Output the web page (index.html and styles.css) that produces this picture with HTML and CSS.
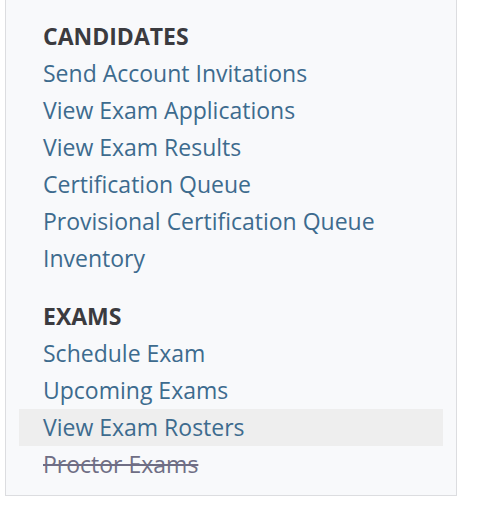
FILE: index.html
```html
<!DOCTYPE html>
<html>
<head>
<meta charset="utf-8">
<link rel="stylesheet" href="styles.css">
</head>
<body>
<nav class="panel">
  <section class="group">
    <h3 class="heading">CANDIDATES</h3>
    <a class="item" href="#">Send Account Invitations</a>
    <a class="item" href="#">View Exam Applications</a>
    <a class="item" href="#">View Exam Results</a>
    <a class="item" href="#">Certification Queue</a>
    <a class="item" href="#">Provisional Certification Queue</a>
    <a class="item" href="#">Inventory</a>
  </section>
  <section class="group">
    <h3 class="heading">EXAMS</h3>
    <a class="item" href="#">Schedule Exam</a>
    <a class="item" href="#">Upcoming Exams</a>
    <a class="item active" href="#">View Exam Rosters</a>
    <a class="item disabled" href="#">Proctor Exams</a>
  </section>
</nav>
</body>
</html>
```
FILE: styles.css
```css
html, body {
  margin: 0;
  padding: 0;
  background: #ffffff;
}
body {
  font-family: "Open Sans", "Lato", sans-serif;
}
.panel {
  margin-left: 5px;
  width: 452px;
  box-sizing: border-box;
  background: #f8f9fb;
  border: 1px solid #dcdde0;
  border-top: none;
  padding: 18px 13px 12px 13px;
  display: flex;
  flex-direction: column;
  gap: 21px;
}
.group {
  display: flex;
  flex-direction: column;
}
.heading {
  margin: 0;
  padding-left: 24px;
  font-size: 23px;
  line-height: 37px;
  font-weight: 700;
  color: #3b3b3f;
}
.item {
  display: block;
  padding-left: 24px;
  font-size: 23px;
  line-height: 37px;
  color: #3d6b8e;
  text-decoration: none;
}
.item.active {
  background: #eeeeee;
}
.item.disabled {
  color: #6f6e85;
  text-decoration: line-through;
}
```
